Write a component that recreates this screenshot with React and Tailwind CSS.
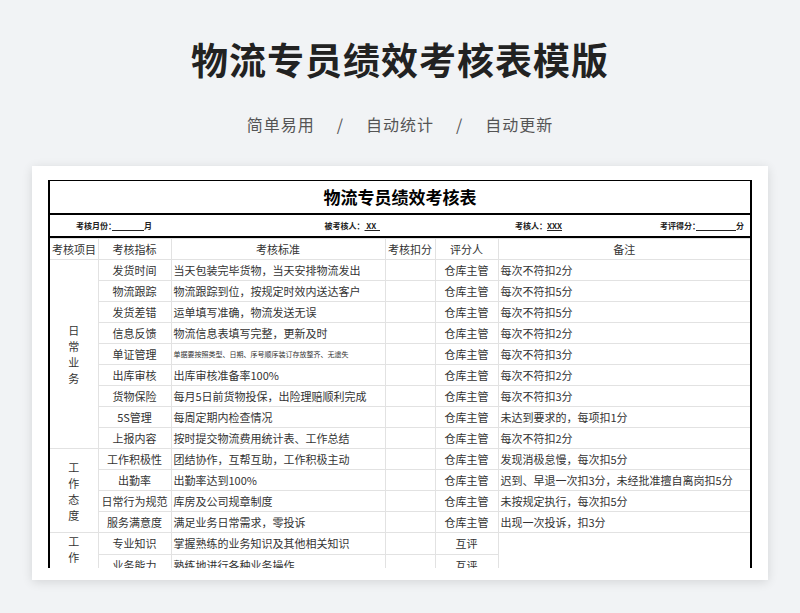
const F = { fontFamily: '"Noto Sans CJK SC", sans-serif' };
const g1 = [
  ["发货时间", "当天包装完毕货物，当天安排物流发出", "每次不符扣2分"],
  ["物流跟踪", "物流跟踪到位，按规定时效内送达客户", "每次不符扣5分"],
  ["发货差错", "运单填写准确，物流发送无误", "每次不符扣5分"],
  ["信息反馈", "物流信息表填写完整，更新及时", "每次不符扣2分"],
  ["单证管理", "单据要按照类型、日期、序号顺序装订存放整齐、无遗失", "每次不符扣3分", true],
  ["出库审核", "出库审核准备率100%", "每次不符扣2分"],
  ["货物保险", "每月5日前货物投保，出险理赔顺利完成", "每次不符扣3分"],
  ["5S管理", "每周定期内检查情况", "未达到要求的，每项扣1分"],
  ["上报内容", "按时提交物流费用统计表、工作总结", "每次不符扣2分"],
];
const g2 = [
  ["工作积极性", "团结协作，互帮互助，工作积极主动", "发现消极怠慢，每次扣5分"],
  ["出勤率", "出勤率达到100%", "迟到、早退一次扣3分，未经批准擅自离岗扣5分"],
  ["日常行为规范", "库房及公司规章制度", "未按规定执行，每次扣5分"],
  ["服务满意度", "满足业务日常需求，零投诉", "出现一次投诉，扣3分"],
];
const g3 = [
  ["专业知识", "掌握熟练的业务知识及其他相关知识"],
  ["业务能力", "熟练地进行各种业务操作"],
  ["沟通能力", "沟通顺畅"],
];
const td = "border border-[#e2e2e2] h-[21px] px-[2px] whitespace-nowrap overflow-hidden";
function Group({ name, rows, rater }) {
  return rows.map((r, i) => (
    <tr key={i}>
      {i === 0 && (
        <td rowSpan={rows.length} className="border border-[#e2e2e2] border-l-0 text-center align-middle leading-[16px]">
          {name.split("").map((c, k) => <div key={k}>{c}</div>)}
        </td>
      )}
      <td className={td + " text-center"}>{r[0]}</td>
      <td className={td + (r[3] ? " text-[7px]" : "")}>{r[1]}</td>
      <td className={td}></td>
      <td className={td + " text-center"}>{rater}</td>
      {r[2] !== undefined ? <td className={td + " border-r-0"}>{r[2]}</td> : i === 0 ? <td rowSpan={rows.length} className="border-b border-[#e2e2e2]"></td> : null}
    </tr>
  ));
}
export default function App() {
  return (
    <div className="w-[800px] h-[613px] bg-[#f1f3f5] flex flex-col items-center overflow-hidden" style={F}>
      <h1 className="mt-[33px] text-[37px] leading-[52px] font-bold text-[#222] tracking-[1px]">物流专员绩效考核表模版</h1>
      <div className="mt-[27px] text-[16px] text-[#555] flex gap-[22px] tracking-[1px]">
        <span>简单易用</span><span>/</span><span>自动统计</span><span>/</span><span>自动更新</span>
      </div>
      <div className="mt-[30px] w-[736px] h-[414px] bg-white shadow-[0_2px_10px_rgba(0,0,0,0.12)] pt-[14px] px-[16px] overflow-hidden">
        <div className="border-x-2 border-t border-black h-[388px] overflow-hidden text-[11px] text-[#333]">
          <div className="h-[34px] flex items-center justify-center text-[17px] font-bold text-black border-b-2 border-black">物流专员绩效考核表</div>
          <div className="h-[23px] grid grid-cols-4 items-center text-[8px] font-bold text-[#222] border-b-2 border-black px-[6px]">
            <div className="pl-[20px]">考核月份：<u>　　　　</u>月</div>
            <div className="text-right pr-[20px]">被考核人：<u>&nbsp;XX&nbsp;&nbsp;</u></div>
            <div className="text-right pr-[10px]">考核人：<u>XXX</u></div>
            <div className="text-right">考评得分：<u>　　　　　</u>分</div>
          </div>
          <table className="w-full table-fixed border-collapse">
            <colgroup>
              <col className="w-[48px]" /><col className="w-[73px]" /><col className="w-[214px]" /><col className="w-[50px]" /><col className="w-[63px]" /><col />
            </colgroup>
            <tbody>
              <tr>
                {["考核项目", "考核指标", "考核标准", "考核扣分", "评分人", "备注"].map((h, i) => (
                  <td key={i} className={td + " text-center" + (i === 0 ? " border-l-0" : "") + (i === 5 ? " border-r-0" : "")}>{h}</td>
                ))}
              </tr>
              <Group name="日常业务" rows={g1} rater="仓库主管" />
              <Group name="工作态度" rows={g2} rater="仓库主管" />
              <Group name="工作能力" rows={g3} rater="互评" />
            </tbody>
          </table>
        </div>
      </div>
    </div>
  );
}
